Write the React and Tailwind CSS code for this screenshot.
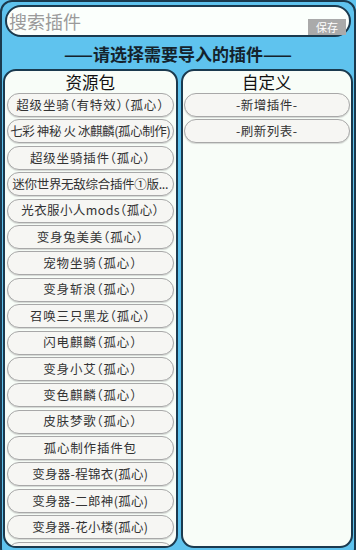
import React from "react";

const left = [
  ["超级坐骑（有特效）（孤心）", "tracking-[0.8px]"],
  ["七彩 神秘 火 冰麒麟(孤心制作)", "tracking-[-0.4px]"],
  ["超级坐骑插件（孤心）", "tracking-[0.8px]"],
  ["迷你世界无敌综合插件①版...", "tracking-[-0.3px]"],
  ["光衣服小人mods（孤心）", "tracking-[0.4px]"],
  ["变身兔美美（孤心）", "tracking-[0.8px]"],
  ["宠物坐骑（孤心）", "tracking-[0.8px]"],
  ["变身斩浪（孤心）", "tracking-[0.8px]"],
  ["召唤三只黑龙（孤心）", "tracking-[0.8px]"],
  ["闪电麒麟（孤心）", "tracking-[0.8px]"],
  ["变身小艾（孤心）", "tracking-[0.8px]"],
  ["变色麒麟（孤心）", "tracking-[0.8px]"],
  ["皮肤梦歌（孤心）", "tracking-[0.8px]"],
  ["孤心制作插件包", "tracking-[0.8px]"],
  ["变身器-程锦衣(孤心)", "tracking-[0.3px]"],
  ["变身器-二郎神(孤心)", "tracking-[0.3px]"],
  ["变身器-花小楼(孤心)", "tracking-[0.3px]"],
  ["", ""],
];

const right = ["-新增插件-", "-刷新列表-"];

function Item({ text, cls }) {
  return (
    <div
      className={
        "h-[24px] shrink-0 rounded-full border border-[#a8a8a8] bg-[#f6f6f3] shadow-[0_1px_1px_rgba(0,0,0,0.15)] flex items-center justify-center text-[12.5px] text-[#333] whitespace-nowrap overflow-hidden leading-none [font-feature-settings:'halt'] " +
        cls
      }
    >
      {text}
    </div>
  );
}

export default function App() {
  return (
    <div
      className="w-[356px] h-[550px] bg-[#5fc3ee] overflow-hidden"
      style={{ fontFamily: '"Noto Sans CJK SC", "Noto Sans", sans-serif' }}
    >
      <div className="h-[560px] border-2 border-[#1b3a4e] rounded-[12px] flex flex-col">
        <div className="mx-[3px] mt-[3px] h-[32px] rounded-full border-2 border-[#1b3a4e] bg-[#fbfffc] flex items-start relative">
          <span className="ml-[2px] mt-[2px] text-[18px] text-[#9a9a9a] leading-[24px]">搜索插件</span>
          <div className="absolute right-[3px] top-[12px] w-[38px] h-[16px] bg-[#aaaaaa] flex items-center justify-center text-[11px] text-white leading-none">
            保存
          </div>
        </div>
        <div className="h-[32px] flex items-center justify-center text-[17px] font-bold text-[#14222c] leading-none">
          ——请选择需要导入的插件——
        </div>
        <div className="flex gap-[3px] px-[1px] h-[479px]">
          <div className="w-[175px] h-full rounded-[13px] border-2 border-[#1b3a4e] bg-[#f8fdf8] overflow-hidden flex flex-col px-[2px]">
            <div className="h-[22px] shrink-0 flex items-center justify-center text-[16.5px] text-[#111] leading-none">资源包</div>
            <div className="flex flex-col gap-[2.4px]">
              {left.map(([t, c], i) => (
                <Item key={i} text={t} cls={c} />
              ))}
            </div>
          </div>
          <div className="w-[173px] h-full rounded-[13px] border-2 border-[#1b3a4e] bg-[#f8fdf8] overflow-hidden flex flex-col px-[1px]">
            <div className="h-[22px] shrink-0 flex items-center justify-center text-[16.5px] text-[#111] leading-none">自定义</div>
            <div className="flex flex-col gap-[2.4px]">
              {right.map((t) => (
                <Item key={t} text={t} cls="tracking-[0.5px]" />
              ))}
            </div>
          </div>
        </div>
      </div>
    </div>
  );
}
